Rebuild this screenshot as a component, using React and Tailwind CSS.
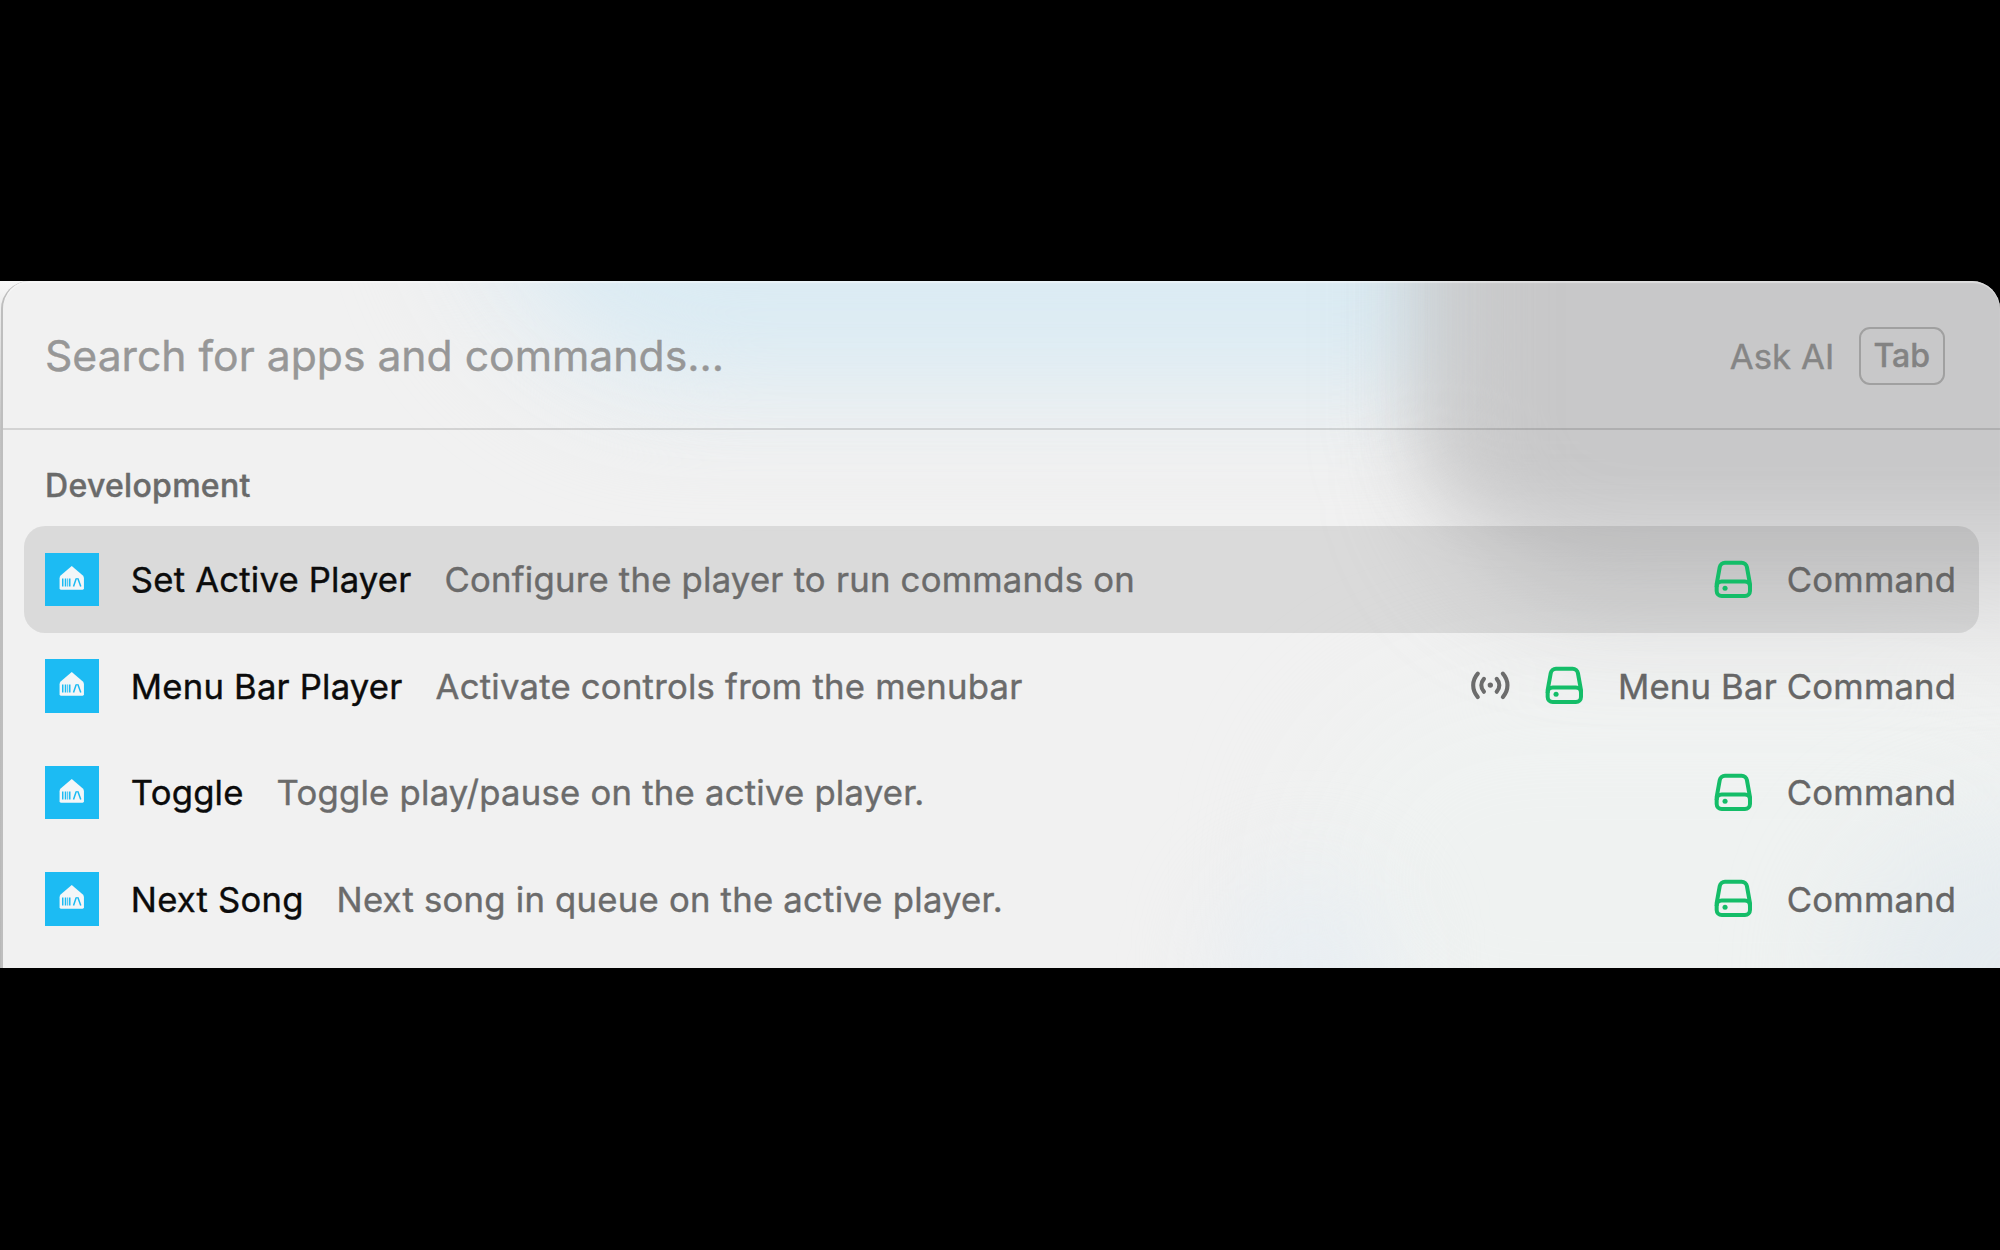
const rows = [
  { title: "Set Active Player", subtitle: "Configure the player to run commands on", kind: "Command", active: true },
  { title: "Menu Bar Player", subtitle: "Activate controls from the menubar", kind: "Menu Bar Command", live: true },
  { title: "Toggle", subtitle: "Toggle play/pause on the active player.", kind: "Command" },
  { title: "Next Song", subtitle: "Next song in queue on the active player.", kind: "Command" },
];

function AppIcon() {
  return (
    <svg viewBox="0 0 54 54" className="size-[53.5px] shrink-0 bg-[#1cbbf3]" aria-hidden="true">
      <path d="M27 13.2 38.2 22.8Q39.3 24 39.3 25.6V35.6Q39.3 37 37.9 37H16.1Q14.7 37 14.7 35.6V25.6Q14.7 24 15.8 22.8Z" fill="#f3f6f8" />
      <g fill="none" stroke="#1cbbf3" strokeWidth="1.5">
        <path d="M17.9 25.7v8.2M20.7 25.7v8.2M25 25.7v8.2M28.8 33.9l2.7-8.2M33.2 25.7l2.9 8.2" />
        <path d="M22.9 25.7v8.2M31.3 25.9h2.2" strokeWidth="0.9" />
      </g>
    </svg>
  );
}

function DriveIcon() {
  return (
    <svg viewBox="0 0 16 16" className="size-[42.67px] shrink-0 text-[#14bd68]" fill="none" stroke="currentColor" strokeWidth="1.5" strokeLinejoin="round" aria-hidden="true">
      <rect x="1.75" y="8.85" width="12.5" height="5.4" rx="1.9" />
      <path d="M1.75 10.9V9.8L2.9 3.4A2 2 0 0 1 4.87 1.75h6.26A2 2 0 0 1 13.1 3.4l1.15 6.4v1.1" />
      <circle cx="4.9" cy="11.35" r="0.95" fill="currentColor" stroke="none" />
    </svg>
  );
}

function BroadcastIcon() {
  return (
    <svg viewBox="0 0 16 16" className="size-[42.67px] shrink-0 text-[#6c6c6c]" fill="none" stroke="currentColor" strokeWidth="1.55" strokeLinecap="round" aria-hidden="true">
      <path d="M3.3 3.6C1 6.2 1 9.8 3.3 12.4M12.7 3.6c2.3 2.6 2.3 6.2 0 8.8M5.6 5.6c-1.3 1.5-1.3 3.3 0 4.8M10.4 5.6c1.3 1.5 1.3 3.3 0 4.8" />
      <circle cx="8" cy="7.9" r="1" fill="currentColor" stroke="none" />
    </svg>
  );
}

/* Wallpaper colours showing softly through the translucent window. */
function Backdrop() {
  return (
    <div className="absolute inset-0 overflow-hidden" aria-hidden="true">
      <div className="absolute -top-[200px] left-[420px] h-[345px] w-[1010px] rounded-bl-[260px] bg-[#e6eef3]/60 blur-[45px]" />
      <div className="absolute -top-[180px] left-[500px] h-[270px] w-[930px] rounded-bl-[220px] bg-[#dbebf3] blur-[42px]" />
      <div className="absolute top-[400px] left-[1300px] h-[400px] w-[800px] rounded-full bg-[#eff3f2]/60 blur-[60px]" />
      <div className="absolute top-[590px] left-[1220px] h-[260px] w-[170px] rounded-full bg-[#e7eef2]/80 blur-[45px]" />
      <div className="absolute top-[550px] left-[1850px] h-[280px] w-[340px] rounded-full bg-[#e2eaef]/80 blur-[60px]" />
      <div className="absolute -top-[300px] left-[1408px] h-[525px] w-[800px] rounded-bl-[80px] bg-[#a9a9a9]/28 blur-[30px]" />
      <div className="absolute -top-[300px] left-[1435px] h-[618px] w-[720px] rounded-bl-[160px] bg-[#b2b2b3]/49 blur-[58px]" />
    </div>
  );
}

function Row({ item }) {
  return (
    <li className={`flex h-[106.5px] items-center rounded-[21px] pr-[22.8px] pl-[21.33px] ${item.active ? "bg-black/[0.095]" : ""}`}>
      <AppIcon />
      <span className="ml-8 tracking-[0.2px] text-[#0b0b0b]">{item.title}</span>
      <span className="ml-[33px] tracking-[0.24px] text-[#6b6b6b]">{item.subtitle}</span>
      <span className="ml-auto flex items-center gap-8">
        {item.live && <BroadcastIcon />}
        <DriveIcon />
        <span className="tracking-[0.2px] text-[#666666]">{item.kind}</span>
      </span>
    </li>
  );
}

export default function App() {
  return (
    <main className="flex h-[1250px] w-[2000px] flex-col overflow-hidden bg-black pt-[281px] font-['Inter',sans-serif]">
      <div className="flex h-[687px] w-full shrink-0 overflow-hidden bg-[linear-gradient(to_bottom,#f8f8f8,#e8e8e8_40px,#c2c2c2_150px,#b8b8b8)] bg-[length:60px_100%] bg-no-repeat">
        <section className="relative isolate ml-px h-[740px] w-full overflow-hidden rounded-[28px] border-l-2 border-[#bebebe] bg-[#f1f1f1]">
          <Backdrop />
          <div className="relative flex h-full flex-col rounded-t-[27px] text-[34.67px] leading-[42px] shadow-[inset_0_2px_1px_rgba(255,255,255,0.4)] [-webkit-text-stroke:0.4px]">
            <header className="flex h-[149px] shrink-0 items-center border-b-[2.67px] border-black/12 pt-[2px] pr-[55px] pl-[42px]">
              <span className="text-[42.67px] leading-[52px] text-[#979797]">Search for apps and commands...</span>
              <span className="ml-auto tracking-[0.1px] text-[#858585]">Ask AI</span>
              <kbd className="ml-[24px] flex h-[58px] w-[86.5px] items-center justify-center rounded-[11px] border-2 border-[#a0a0a0] font-['Inter',sans-serif] text-[32px] font-medium text-[#838383]">Tab</kbd>
            </header>
            <h2 className="flex h-[96px] shrink-0 items-center pt-[16px] pl-[42px] text-[32px] font-medium tracking-[0.3px] text-[#6a6a6a]">Development</h2>
            <ul className="mr-[21px] ml-[21px]">
              {rows.map((item) => <Row key={item.title} item={item} />)}
            </ul>
          </div>
        </section>
      </div>
    </main>
  );
}
